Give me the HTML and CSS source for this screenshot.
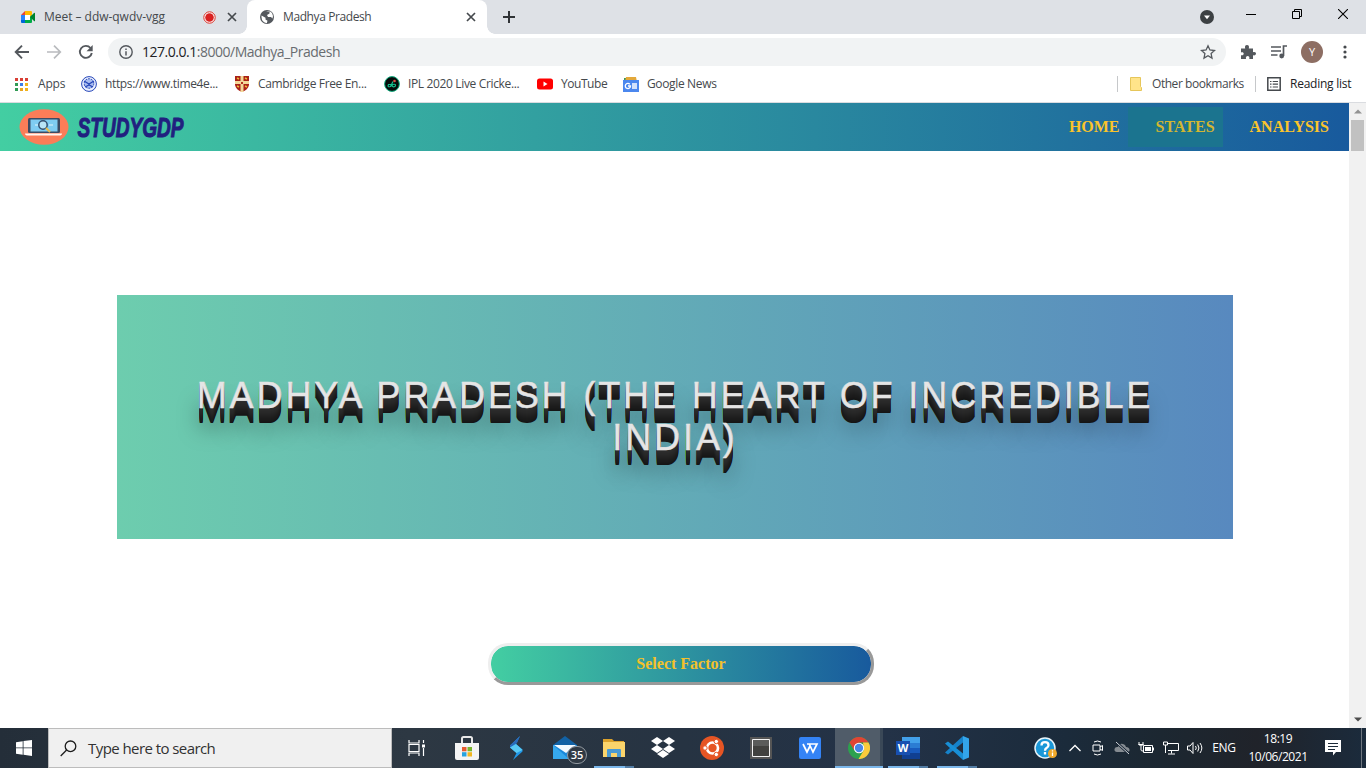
FILE: index.html
```html
<!DOCTYPE html>
<html lang="en">
<head>
<meta charset="utf-8">
<title>Madhya Pradesh</title>
<link rel="stylesheet" href="styles.css">
</head>
<body>
<div class="screen">
  <header class="tabs">
    <div class="tab tab-idle">
      <svg class="ico" width="16" height="16" viewBox="0 0 16 16"><path d="M1 6h4v5H1z" fill="#2684fc"/><path d="M1 6l4-4v4z" fill="#ea4335"/><path d="M5 2h6q1 0 1 1v3l-2 2V6H5z" fill="#ffba00"/><path d="M1 11h4v3H2q-1 0-1-1z" fill="#0066da"/><path d="M5 14v-3h5V8l2-2v7q0 1-1 1z" fill="#00ac47"/><path d="M5 6h5v5H5z" fill="#fff"/><path d="M10 8l4-4q1-.7 1 .3v7.400q0 1-1 .3z" fill="#00832d"/></svg>
      <span class="t t-meet">Meet – ddw-qwdv-vgg</span>
      <svg class="ico" width="13" height="13" viewBox="0 0 13 13"><circle cx="6.500" cy="6.500" r="5.700" fill="#fff" stroke="#d93025"/><circle cx="6.500" cy="6.500" r="4.300" fill="#d92020"/></svg>
      <svg class="ico" width="10" height="10" viewBox="0 0 10 10"><path d="M1 1l8 8M9 1L1 9" stroke="#45494d" stroke-width="1.700"/></svg>
    </div>
    <div class="tab tab-active">
      <svg class="ico" width="16" height="16" viewBox="0 0 16 16"><circle cx="8" cy="8" r="7" fill="#54585d"/><path d="M2.500 6.500l4 2.300v1.700l2 1.300-.7 2.500q-5-.8-5.300-6zM7 2.500h3.500v2L8 6l1 2h3l1.500 1.500q1-3-.5-5.500-2.500-3-6-1.500z" fill="#fff"/></svg>
      <span class="t t-mp">Madhya Pradesh</span>
      <svg class="ico" width="10" height="10" viewBox="0 0 10 10"><path d="M1 1l8 8M9 1L1 9" stroke="#45494d" stroke-width="1.700"/></svg>
    </div>
    <svg class="new-tab" width="12" height="12" viewBox="0 0 12 12"><path d="M6 0v12M0 6h12" stroke="#303336" stroke-width="2"/></svg>
    <svg class="tab-search" width="14" height="14" viewBox="0 0 14 14"><circle cx="7" cy="7" r="7" fill="#3c4043"/><path d="M4 5.500h6L7 9.300z" fill="#fff"/></svg>
    <span class="win"><svg width="10" height="10" viewBox="0 0 10 10"><path d="M0 5.500h10" stroke="#000"/></svg></span>
    <span class="win"><svg width="10" height="10" viewBox="0 0 10 10" fill="none" stroke="#000"><path d="M.5 2.500h7v7h-7zM2.500 2.500v-2h7v7h-2"/></svg></span>
    <span class="win"><svg width="10" height="10" viewBox="0 0 10 10"><path d="M0 0l10 10M10 0L0 10" stroke="#000" stroke-width="1.100"/></svg></span>
  </header>

  <div class="toolbar">
    <svg width="16" height="16" viewBox="0 0 16 16"><path d="M15 8H2M8 1.700L1.700 8 8 14.300" fill="none" stroke="#54585d" stroke-width="1.900"/></svg>
    <svg width="16" height="16" viewBox="0 0 16 16"><path d="M1 8h13M8 1.700L14.300 8 8 14.300" fill="none" stroke="#b9bbbe" stroke-width="1.700"/></svg>
    <svg width="16" height="16" viewBox="0 0 16 16"><path d="M13.800 9A6 6 0 1 1 12.500 4" fill="none" stroke="#54585d" stroke-width="1.900"/><path d="M14.700 1v6.200H8.500z" fill="#54585d"/></svg>
    <div class="omnibox">
      <svg width="14" height="14" viewBox="0 0 14 14"><circle cx="7" cy="7" r="6.200" fill="none" stroke="#54585d" stroke-width="1.400"/><path d="M7 6.200v4.300M7 3.500v1.600" stroke="#54585d" stroke-width="1.500"/></svg>
      <span class="url"><b>127.0.0.1</b>:8000/Madhya_Pradesh</span>
      <svg width="16" height="16" viewBox="0 0 16 16"><path d="M8 1.800l1.900 4.200 4.600.5-3.400 3.100.9 4.500-4-2.300-4 2.300.9-4.500L1.500 6.500 6.100 6z" fill="none" stroke="#54585d" stroke-width="1.300"/></svg>
    </div>
    <svg class="ext" width="16" height="16" viewBox="0 0 16 16"><path d="M1 4.500h4.200C4.500 2 5.500 1 7 1s2.500 1 1.800 3.500H13v3.800c2.300-.7 3 .5 3 1.500s-1 2-3 1.500V15H9.300c.5-2.200-.4-3-1.600-3s-2.200.8-1.700 3H1v-3.700c2 .3 2.700-.5 2.700-1.500S3 8 1 8.400z" fill="#54585d"/></svg>
    <svg class="list" width="16" height="14" viewBox="0 0 16 14"><path d="M0 2h10M0 6h10M0 10h6.500M12.500 11V1H16" fill="none" stroke="#54585d" stroke-width="1.700"/><circle cx="10.700" cy="11" r="2.400" fill="#54585d"/></svg>
    <span class="avatar">Y</span>
    <svg class="dots" width="4" height="14" viewBox="0 0 4 14" fill="#45494d"><circle cx="2" cy="2" r="1.600"/><circle cx="2" cy="7" r="1.600"/><circle cx="2" cy="12" r="1.600"/></svg>
  </div>

  <nav class="bookmarks">
    <svg width="14" height="14" viewBox="0 0 14 14"><path d="M0 1h3v3H0zM5 1h3v3H5zM0 6h3v3H0z" fill="#d93f35"/><path d="M10 1h3v3h-3z" fill="#d93f35"/><path d="M10 6h3v3h-3zM10 11h3v3h-3z" fill="#f2b31b"/><path d="M5 6h3v3H5z" fill="#3b7de9"/><path d="M0 6h3v3H0zM0 11h3v3H0z" fill="#319b55"/><path d="M5 11h3v3H5z" fill="#e8a520"/></svg>
    <span class="b-apps">Apps</span>
    <svg width="16" height="16" viewBox="0 0 16 16" fill="none" stroke="#2545b8"><circle cx="8" cy="8" r="7.400" fill="#edf2ff"/><circle cx="8" cy="7.500" r="4.800" fill="#a9bdf0" stroke-dasharray="2 1"/><path d="M3 5l5 3 5-3M4 11l4-2 4 2" stroke-width="1.300"/></svg>
    <span class="b-time">https://www.time4e...</span>
    <svg width="14" height="16" viewBox="0 0 14 16"><path d="M0 0h14v9q-1 5-7 7Q1 14 0 9z" fill="#aa2218"/><path d="M5.500 0h3v5H14v3H8.500v8h-3V8H0V5h5.500z" fill="#f3d899"/><path d="M2 2l2 1M10 2l2 1M2 10l2 1M10 10l2 1" stroke="#f0b936" stroke-width="1.500"/><path d="M6 6h2v2H6z" fill="#b13422"/></svg>
    <span class="b-cam">Cambridge Free En...</span>
    <svg width="16" height="16" viewBox="0 0 16 16"><circle cx="8" cy="8" r="7.400" fill="#050b0a" stroke="#0fb080"/><circle cx="10.500" cy="5" r="1.300" fill="#e04b42"/><path d="M7 8.500H4.500q-1.500 3 2 2L9 5.500M8.500 8.500q4-1 2.700 1.700-2 1.200-3.200 0z" fill="none" stroke="#16bf8e" stroke-width="1.200"/></svg>
    <span class="b-ipl">IPL 2020 Live Cricke...</span>
    <svg width="16" height="16" viewBox="0 0 16 16"><rect y="2.500" width="16" height="11" rx="2.500" fill="#f00"/><path d="M6.500 5.500l4 2.500-4 2.500z" fill="#fff"/></svg>
    <span class="b-yt">YouTube</span>
    <svg width="16" height="16" viewBox="0 0 16 16"><path d="M1 2h9v5H1z" fill="#3c9b56"/><path d="M3 1h10l1 5H2z" fill="#e3a83a"/><path d="M0 4h16v12H0z" fill="#4b87ee"/><path d="M6.800 8.200A2.600 2.600 0 1 0 7.500 10H5M9 8h5M9 10h5M9 12h5" fill="none" stroke="#fff" stroke-width="1.300"/></svg>
    <span class="b-news">Google News</span>
    <i class="sep"></i>
    <svg width="12" height="14" viewBox="0 0 12 14"><path d="M.5.500h10v9l1 1v3H.5z" fill="#ffe48a" stroke="#e6c65a"/></svg>
    <span class="b-other">Other bookmarks</span>
    <i class="sep"></i>
    <svg width="14" height="14" viewBox="0 0 14 14" fill="none" stroke="#45494d"><path d="M.8.800h12.400v12.400H.8z" stroke-width="1.500"/><path d="M3 4.500h1.500M3 7.200h1.500M3 10h1.500M5.700 4.500H11M5.700 7.200H11M5.700 10H11" stroke-width="1.200"/></svg>
    <span class="b-read">Reading list</span>
  </nav>

  <div class="viewport">
    <main class="page">
      <div class="navbar">
        <svg class="logo" width="220" height="48" viewBox="0 0 220 48">
          <ellipse cx="29" cy="24" rx="24.500" ry="17.800" fill="#fb7d58"/>
          <rect x="13" y="15" width="32" height="15" rx="1.500" fill="#3c4b63"/><rect x="15.500" y="16.500" width="27" height="12" fill="#7fcdf2"/>
          <circle cx="28" cy="22" r="4.200" fill="#b9e5f6" stroke="#32506f" stroke-width="1.500"/><path d="M31 25l4 4" stroke="#e9bd4f" stroke-width="2"/><path d="M20 22h3M34 22h4" stroke="#e4f6fc"/>
          <path d="M10 30.500h37q0 2-3 2H13q-3 0-3-2z" fill="#fff6ef"/>
          <text class="wordmark" x="62.500" y="34" textLength="106" lengthAdjust="spacingAndGlyphs">STUDYGDP</text>
        </svg>
        <a class="link">HOME</a>
        <a class="link current">STATES</a>
        <a class="link">ANALYSIS</a>
      </div>
      <section class="hero"><h1>MADHYA PRADESH (THE HEART OF INCREDIBLE INDIA)</h1></section>
      <button class="factor">Select Factor</button>
    </main>
    <div class="scrollbar">
      <svg width="8" height="5" viewBox="0 0 8 5"><path d="M0 4.500L4 .5l4 4z" fill="#929292"/></svg>
      <i class="thumb"></i>
      <svg width="8" height="5" viewBox="0 0 8 5"><path d="M0 .5l4 4 4-4z" fill="#4c4c4c"/></svg>
    </div>
  </div>

  <footer class="taskbar">
    <span class="start"><svg width="16" height="16" viewBox="0 0 16 16" fill="#fff"><path d="M0 2.200L6.700 1.200v6.300H0zM7.500 1.100L16 0v7.500H7.500zM0 8.300h6.700v6.400L0 13.700zM7.500 8.300H16V16l-8.500-1.200z"/></svg></span>
    <div class="search">
      <svg width="17" height="17" viewBox="0 0 17 17" fill="none" stroke="#1c1c1c" stroke-width="1.300"><circle cx="10.500" cy="6.300" r="5.300"/><path d="M6.600 10L.7 16"/></svg>
      <span>Type here to search</span>
    </div>
    <span class="app view"><svg width="18" height="16" viewBox="0 0 18 16" fill="none" stroke="#fff" stroke-width="1.200"><path d="M1 0v3h10V0M1 16v-3h10v3M1 4.500h10v7H1zM15.500 0v3M15.500 8v8"/><path d="M14 4.500h3v3h-3z" fill="#fff" stroke="none"/></svg></span>
    <span class="app"><svg width="24" height="26" viewBox="0 0 24 26"><path d="M7 9V3.500q0-1.500 1.500-1.500h7Q17 2 17 3.500V9" fill="none" stroke="#e8e8e8" stroke-width="2"/><path d="M0 8h24v15q0 2-2 2H2q-2 0-2-2z" fill="#f4f4f4"/><path d="M7 12h4.500v4.300H7z" fill="#e55b30"/><path d="M12.500 12H17v4.300h-4.500z" fill="#78b52c"/><path d="M7 17.200h4.500v4.300H7z" fill="#26a2df"/><path d="M12.500 17.200H17v4.300h-4.500z" fill="#f2b61f"/></svg></span>
    <span class="app"><svg width="14" height="24" viewBox="0 0 14 24"><path d="M11 0L1 9.500v2l6.500 5.500L4 24l9.500-8.500v-2L7 8z" fill="#2198e8"/><path d="M11 0L1 9.500v2L8 7z" fill="#2b69b8"/><path d="M1 11.500L7 8l6.500 6-6 3z" fill="#58c9f4"/></svg></span>
    <span class="app mail"><svg width="24" height="24" viewBox="0 0 24 24"><path d="M0 9l12-9 12 9z" fill="#1262a5"/><path d="M0 9h24v14H0z" fill="#1b89da"/><path d="M1 9h22l-10 8z" fill="#f3faff"/><path d="M0 9l16 14H0z" fill="#36a8ed"/></svg><b class="badge">35</b></span>
    <span class="app open"><svg width="22" height="20" viewBox="0 0 22 20"><path d="M0 1h9l2 2h10v5H0z" fill="#dca22c"/><path d="M0 4h22v15H0z" fill="#fbd46b"/><path d="M4 19v-7q0-1 1-1h12q1 0 1 1v7h-4v-4H8v4z" fill="#4a9ad3"/></svg></span>
    <span class="app"><svg width="24" height="22" viewBox="0 0 24 22" fill="#fff"><path d="M6 0l6 4-6 4-6-4zM18 0l6 4-6 4-6-4zM6 8l6 4-6 4-6-4zM18 8l6 4-6 4-6-4zM12 13l6 4-6 4-6-4z"/></svg></span>
    <span class="app"><svg width="24" height="24" viewBox="0 0 24 24"><circle cx="12" cy="12" r="12" fill="#e65524"/><circle cx="12.500" cy="12" r="5.500" fill="none" stroke="#fff" stroke-width="2.600"/><g fill="#fff" stroke="#e65524"><circle cx="5" cy="12" r="2.200"/><circle cx="16.300" cy="5.500" r="2.200"/><circle cx="16.300" cy="18.500" r="2.200"/></g></svg></span>
    <span class="app"><svg width="22" height="22" viewBox="0 0 22 22"><path d="M0 0h22v22H0z" fill="#555"/><path d="M2.500 2.500h17v17h-17z" fill="#41413f" stroke="#f2f2f2"/><path d="M3 3h16v6H3z" fill="#5b5c5b"/></svg></span>
    <span class="app"><svg width="22" height="22" viewBox="0 0 22 22"><rect width="22" height="22" rx="2" fill="#3483f5"/><path d="M4 7l4 8 3-6M8 7h10l-4 8-3.500-7.500" fill="none" stroke="#fff" stroke-width="1.700"/></svg></span>
    <span class="app open focus"><svg width="22" height="22" viewBox="0 0 22 22"><circle cx="11" cy="11" r="11" fill="#2ca14f"/><path d="M1.500 5.500A11 11 0 0 1 20.500 5.500H11L6 13z" fill="#e14434"/><path d="M20.500 5.500A11 11 0 0 1 10.500 22L16 13l-1-7.500z" fill="#fbcb3c"/><circle cx="11" cy="11" r="5.200" fill="#fff"/><circle cx="11" cy="11" r="4.200" fill="#4a86e8"/></svg></span>
    <span class="app open"><svg width="24" height="22" viewBox="0 0 24 22"><path d="M6 0h18v6H6z" fill="#42a0ea"/><path d="M6 6h18v5H6z" fill="#2b7cd3"/><path d="M6 11h18v5H6z" fill="#185abd"/><path d="M6 16h18v6H6z" fill="#103f91"/><path d="M0 4h14v14H0z" fill="#184fb0"/><text class="glyph-w" x="7" y="15" text-anchor="middle">W</text></svg></span>
    <span class="app open"><svg width="24" height="24" viewBox="0 0 24 24"><path d="M18 0l6 2.500v19L18 24z" fill="#33a5ea"/><path d="M18 0v6.500L3 18.500 0 16.500z" fill="#1682ca"/><path d="M18 24v-6.500L3 5.500 0 7.500z" fill="#188fd6"/></svg></span>
    <span class="tray help"><svg width="24" height="22" viewBox="0 0 24 22"><circle cx="11" cy="11" r="10" fill="#1b98d8" stroke="#e9f5fb" stroke-width="1.500"/><path d="M7.500 8.500q0-3.300 3.500-3.300t3.500 3q0 1.500-2 2.800-1.500 1-1.500 2.700M11 15v2.500" fill="none" stroke="#fff" stroke-width="2.300"/><circle cx="18.500" cy="16.500" r="4.500" fill="#f0a92c"/><path d="M18.500 15.500v3.500M18.500 13.200v1.200" stroke="#fff" stroke-width="1.300"/></svg></span>
    <span class="tray"><svg width="12" height="8" viewBox="0 0 12 8"><path d="M.5 7L6 1.500 11.500 7" fill="none" stroke="#fff" stroke-width="1.300"/></svg></span>
    <span class="tray"><svg width="12" height="16" viewBox="0 0 12 16" fill="none" stroke="#fff"><path d="M1 5h7v6H1zM8 7l2.500-1.500v5L8 9M2 2q3.500-2 7 0M2 14q3.500 2 7 0"/></svg></span>
    <span class="tray"><svg width="16" height="14" viewBox="0 0 16 14"><path d="M3 11q-3-.5-2.500-3T4 6q1-4 5-3 2.500.5 3 3 3 0 3.500 2.500T13 11z" fill="#858b91"/><path d="M2 1l13 12" stroke="#182636" stroke-width="2.500"/><path d="M2 1l13 12" stroke="#d2d5d8"/></svg></span>
    <span class="tray"><svg width="16" height="14" viewBox="0 0 16 14" fill="none" stroke="#fff"><path d="M5.500 4.500h9v7h-9zM15.500 6.500v3M1 1v3h4V1M3 4v5q0 1 2 1M.5 3.500h5"/><path d="M7 6h6v4H7z" fill="#fff" stroke="none"/></svg></span>
    <span class="tray"><svg width="16" height="14" viewBox="0 0 16 14" fill="none" stroke="#fff"><path d="M5 2.500h10.500v7H5M8.500 9.500v3M5 13h7M.5 1v3h4V1zM2.500 4v8"/></svg></span>
    <span class="tray"><svg width="17" height="14" viewBox="0 0 17 14" fill="none" stroke="#fff"><path d="M.5 5h2.500l3-3.500v11L3 9H.5zM8.500 5q1.500 2 0 4M10.700 3.500q2.500 3.500 0 7M13 2q3.700 5 0 10"/></svg></span>
    <span class="lang">ENG</span>
    <span class="clock"><span>18:19</span><span class="date">10/06/2021</span></span>
    <span class="notif"><svg width="16" height="16" viewBox="0 0 16 16"><path d="M0 0h16v12h-5l-3 3.500L8 12H0z" fill="#fff"/><path d="M3 3.500h10M3 6.500h10M3 9.500h7" stroke="#1c2a39" stroke-width="1.200"/></svg></span>
    <i class="peek"></i>
  </footer>
</div>
</body>
</html>
```
FILE: styles.css
```css
* { box-sizing: border-box; }
body { margin: 0; background: #fff; overflow: hidden; }
svg { display: block; flex: none; }
.screen { width: 1366px; height: 768px; display: grid; grid-template-rows: 34px 36px 33px 1fr 40px; font: 12px/16px "Open Sans", sans-serif; color: #45494d; }

/* Tab strip */
.tabs { display: grid; grid-template-columns: 247px 240px 44px 1fr 36px 46px 46px 46px; background: #dee1e6; align-items: center; }
.tab { display: grid; align-items: center; height: 34px; }
.tab-idle { grid-template-columns: 24px 159px 24px 10px; padding-left: 20px; }
.tab-active { grid-template-columns: 24px 183px 10px; padding-left: 12px; background: #fff; border-radius: 8px 8px 0 0; position: relative; }
.tab-active::before, .tab-active::after { content: ""; position: absolute; bottom: 0; width: 8px; height: 8px; }
.tab-active::before { left: -8px; background: radial-gradient(circle at 0 0, #dee1e6 7.500px, #fff 8px); }
.tab-active::after { right: -8px; background: radial-gradient(circle at 100% 0, #dee1e6 7.500px, #fff 8px); }
.t { white-space: nowrap; }
.t-meet { letter-spacing: -.03px; }
.t-mp { letter-spacing: -.4px; }
.new-tab { margin-left: 16px; }
.tab-search { grid-column: 5; margin-left: 8px; }
.win { display: flex; justify-content: center; padding-bottom: 6px; }

/* Address bar */
.toolbar { display: grid; grid-template-columns: 32px 32px 30px 1118px 32px 29px 37px 1fr; padding-left: 14px; align-items: center; }
.omnibox { display: grid; grid-template-columns: 23px 1058px 16px; align-items: center; height: 28px; border-radius: 14px; background: #f1f3f4; padding-left: 11px; }
.url { font-size: 14px; letter-spacing: -.48px; color: #686c70; white-space: nowrap; }
.url b { font-weight: 400; color: #202124; }
.ext { margin-left: 14px; }
.list { margin-left: 13px; }
.avatar { width: 22px; height: 22px; margin-left: 14px; border-radius: 50%; background: #8d6e63; color: #fff; text-align: center; line-height: 22px; font-size: 11px; }
.dots { margin-left: 19px; }

/* Bookmarks */
.bookmarks { display: grid; grid-template-columns: 23px 43px 24px 130px 23px 126px 24px 129px 24px 62px 24px 470px 13px 22px 103px 12px 23px 1fr; align-items: center; padding: 0 0 4px 15px; border-bottom: 1px solid #dadce0; white-space: nowrap; letter-spacing: -.35px; height: 33px; }
.b-apps { letter-spacing: -.2px; }
.b-read { letter-spacing: -.25px; color: #202124; }
.b-other, .b-yt { letter-spacing: -.45px; }
.sep { width: 1px; height: 16px; background: #c6c8ca; }

/* Site */
.viewport { display: grid; grid-template-columns: 1349px 17px; }
.page { display: flex; flex-direction: column; background: #fff; }
.navbar { display: flex; align-items: center; height: 48px; padding: 0 12px 0 15px; background: linear-gradient(to right, #43cea2, #185a9d); }
.logo { margin-right: auto; }
.wordmark { font: italic bold 27px "Liberation Sans", sans-serif; fill: #21207f; stroke: #21207f; stroke-width: 1px; }
.link { font: bold 16px/40px "Liberation Serif", serif; color: #fac42b; padding: 0 8px; margin-left: 19px; }
.current { color: #d2b632; background: #1b748f; padding-left: 28px; margin-left: 0; }
.hero { display: grid; align-items: center; width: 1116px; height: 244px; margin: 144px 0 0 117px; padding-bottom: 1px; background: linear-gradient(to right, #6dcdae, #5889bf); }
h1 { margin: 0; padding: 0 60px; font: 400 36px/42px "Liberation Sans", sans-serif; letter-spacing: 2.880px; color: #e5e5e5; -webkit-text-stroke: .5px #e5e5e5; text-align: center;
  text-shadow: 0 1px #2e2e2e, 0 2px #2c2c2c, 0 3px #2b2b2b, 0 4px #292929, 0 5px #282828, 0 6px #262626, 0 7px #242424, 0 8px #222, 0 9px #202020, 0 10px #1e1e1e, 0 11px #1c1c1c, 0 12px #1b1b1b, 0 13px #191919, 0 14px #171717, 0 15px #151515, 0 22px 20px rgba(0,0,0,.5); }
.factor { width: 386px; height: 42px; margin: 104px 0 0 488px; border: 3px solid; border-color: #eee #999 #999 #eee; border-radius: 20px; background: linear-gradient(to right, #43cea2, #185a9d) padding-box; font: bold 16px "Liberation Serif", serif; color: #f3c12c; }
.scrollbar { display: grid; grid-template-rows: 17px 1fr 17px; justify-items: center; align-items: center; background: #f1f1f1; }
.thumb { width: 13px; height: 31px; background: #c1c1c1; align-self: start; }

/* Taskbar */
.taskbar { display: grid; grid-template-columns: 48px 345px repeat(12, 49px) 1fr 22px 24px 24px 24px 25px 24px 34px 74px 36px 15px; height: 40px; background: linear-gradient(to right, #242e39, #2d3843 30%, #263342 50%, #233247 65%, #1b2b3b 78%, #1c2731 85%, #20232a 92%, #1b2b3c); color: #fff; align-items: center; }
.start { display: grid; place-items: center; }
.search { display: flex; align-items: center; gap: 11px; width: 344px; height: 40px; padding-left: 11px; background: #f0f0f0; border: 1px solid #bcbcbc; color: #323232; font-size: 15px; letter-spacing: -.57px; }
.app { display: grid; place-items: center; height: 40px; position: relative; }
.view { padding-right: 2px; }
.open::after { content: ""; position: absolute; left: 5px; bottom: 0; width: 40px; height: 2px; background: linear-gradient(to right, #7ab6ea 31px, #527ca4 31px); }
.focus { background: linear-gradient(to right, transparent 1px, #505c69 1px 46px, #3a4857 46px 49px); }
.focus::after { left: 1px; width: 48px; }
.focus::after, .focus ~ .open:nth-of-type(14)::after { background: #7ab6ea; }
.badge { position: absolute; left: 27px; top: 18px; width: 20px; height: 18px; border: 1px solid #9299a0; border-radius: 9px; background: #303a45; text-align: center; font-weight: 600; font-size: 11px; line-height: 16px; }
.glyph-w { font: bold 11px "Open Sans", sans-serif; fill: #fff; }
.tray { display: grid; place-items: center; }
.help { justify-content: end; padding-right: 6px; }
.lang { text-align: center; letter-spacing: -.3px; }
.clock { display: grid; text-align: center; line-height: 18px; letter-spacing: -.45px; }
.notif { display: grid; justify-items: center; }
.peek { justify-self: end; width: 1px; height: 40px; background: #6e767f; margin-right: 4px; }
```
